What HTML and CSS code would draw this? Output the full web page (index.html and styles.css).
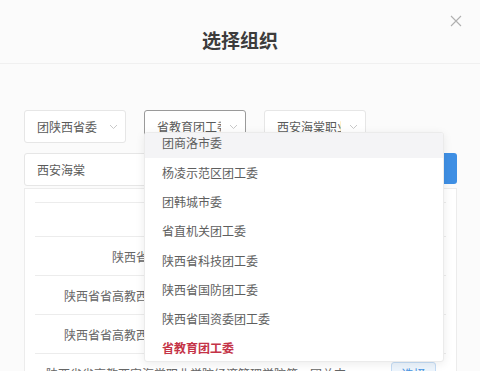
FILE: index.html
```html
<!DOCTYPE html>
<html lang="zh-CN">
<head>
    <meta charset="UTF-8">
    <meta name="viewport" content="width=device-width, initial-scale=1.0">
    <title>选择组织</title>
    <link rel="stylesheet" href="styles.css">
</head>
<body>
    <div class="dialog">
        <div class="dialog-header">
            <h1 class="dialog-title">选择组织</h1>
            <span class="close-btn">
                <svg width="12" height="12" viewBox="0 0 12 12"><path d="M1 1L11 11M11 1L1 11" stroke="#b0b0b0" stroke-width="1.1" fill="none"/></svg>
            </span>
        </div>

        <div class="dialog-body">
            <div class="select-row">
                <div class="select-wrap">
                    <div class="select-box">
                        <span class="select-text">团陕西省委</span>
                        <svg class="arrow" width="9" height="6" viewBox="0 0 9 6"><path d="M1 1L4.5 4.5L8 1" stroke="#c8c8c8" stroke-width="1" fill="none"/></svg>
                    </div>
                </div>
                <div class="select-wrap">
                    <div class="select-box focused">
                        <span class="select-text">省教育团工委</span>
                        <svg class="arrow" width="9" height="6" viewBox="0 0 9 6"><path d="M1 1L4.5 4.5L8 1" stroke="#c8c8c8" stroke-width="1" fill="none"/></svg>
                    </div>
                    <div class="dropdown">
                        <ul class="option-list">
                            <li class="option hover">团商洛市委</li>
                            <li class="option">杨凌示范区团工委</li>
                            <li class="option">团韩城市委</li>
                            <li class="option">省直机关团工委</li>
                            <li class="option">陕西省科技团工委</li>
                            <li class="option">陕西省国防团工委</li>
                            <li class="option">陕西省国资委团工委</li>
                            <li class="option selected">省教育团工委</li>
                        </ul>
                    </div>
                </div>
                <div class="select-wrap">
                    <div class="select-box">
                        <span class="select-text">西安海棠职业学院</span>
                        <svg class="arrow" width="9" height="6" viewBox="0 0 9 6"><path d="M1 1L4.5 4.5L8 1" stroke="#c8c8c8" stroke-width="1" fill="none"/></svg>
                    </div>
                </div>
            </div>

            <div class="search-row">
                <div class="search-input">西安海棠</div>
                <button class="search-btn">搜索</button>
            </div>

            <div class="table-card">
                <div class="table-row table-head">
                    <div class="cell-name">组织名称</div>
                    <div class="cell-action">操作</div>
                </div>
                <div class="table-row">
                    <div class="cell-name">陕西省省高教西安海棠职业学院</div>
                    <div class="cell-action"><button class="pick-btn">选择</button></div>
                </div>
                <div class="table-row">
                    <div class="cell-name">陕西省省高教西安海棠职业学院经济管理学院团委</div>
                    <div class="cell-action"><button class="pick-btn">选择</button></div>
                </div>
                <div class="table-row">
                    <div class="cell-name">陕西省省高教西安海棠职业学院信息工程学院团委</div>
                    <div class="cell-action"><button class="pick-btn">选择</button></div>
                </div>
                <div class="table-row">
                    <div class="cell-name">陕西省省高教西安海棠职业学院经济管理学院第一团总支</div>
                    <div class="cell-action"><button class="pick-btn">选择</button></div>
                </div>
            </div>
        </div>
    </div>
</body>
</html>
```

FILE: styles.css
```css
* {
    margin: 0;
    padding: 0;
    box-sizing: border-box;
    font-family: "Noto Sans CJK SC", "Noto Sans", sans-serif;
}

body {
    background-color: #fbfbfb;
    overflow: hidden;
}

.dialog {
    position: relative;
}

.dialog-header {
    position: relative;
    padding: 28px 0 11px;
    border-bottom: 1px solid #f0f0f0;
    text-align: center;
}

.dialog-title {
    font-size: 19px;
    line-height: 24px;
    font-weight: 700;
    color: #3c3c3c;
}

.close-btn {
    position: absolute;
    top: 15px;
    right: 18px;
    display: flex;
}

.dialog-body {
    padding: 46px 23px 0 24px;
}

.select-row {
    display: flex;
    gap: 18px;
}

.select-wrap {
    position: relative;
}

.select-box {
    width: 102px;
    height: 33px;
    display: flex;
    align-items: center;
    padding-left: 12px;
    border: 1px solid #e6e6e6;
    border-radius: 3px;
    background: #fff;
}

.select-box.focused {
    border-color: #9a9a9a;
}

.select-text {
    width: 64px;
    overflow: hidden;
    white-space: nowrap;
    font-size: 12px;
    color: #5a5a5a;
}

.arrow {
    margin-left: 8px;
}

.dropdown {
    position: absolute;
    top: 22px;
    left: 0;
    width: 300px;
    height: 230px;
    overflow: hidden;
    background: #fff;
    border: 1px solid #ebebeb;
    border-radius: 3px;
    box-shadow: 0 2px 10px rgba(0, 0, 0, 0.08);
    z-index: 10;
}

.option-list {
    list-style: none;
    margin-top: -4.6px;
}

.option {
    height: 29.3px;
    line-height: 29.3px;
    padding-left: 17px;
    font-size: 12px;
    color: #5e5e5e;
}

.option.hover {
    background: #f4f4f6;
}

.option.selected {
    color: #c43347;
    font-weight: 700;
}

.search-row {
    display: flex;
    gap: 10px;
    margin-top: 10px;
}

.search-input {
    flex: 1;
    height: 33px;
    line-height: 31px;
    padding-left: 12px;
    border: 1px solid #e6e6e6;
    border-radius: 3px;
    background: #fff;
    font-size: 12px;
    color: #5a5a5a;
}

.search-btn {
    width: 66px;
    height: 31px;
    border: none;
    border-radius: 3px;
    background: #3f8fe4;
    color: #fff;
    font-size: 12px;
}

.table-card {
    margin-top: 2px;
    padding: 13px 10px 0;
    border: 1px solid #ececec;
    border-bottom: none;
    background: #fff;
}

.table-row {
    display: grid;
    grid-template-columns: 322px 1fr;
    height: 39px;
    align-items: center;
    border-bottom: 1px solid #ececec;
    font-size: 12px;
    color: #666;
}

.table-head {
    height: 35px;
    border-top: 1px solid #ececec;
    color: #444;
}

.cell-name {
    text-align: center;
    white-space: nowrap;
}

.cell-action {
    padding-left: 34px;
}

.pick-btn {
    width: 45px;
    height: 22px;
    border: 1px solid #c4dcf5;
    border-radius: 3px;
    background: #edf5fd;
    color: #4a94e0;
    font-size: 12px;
}
```
